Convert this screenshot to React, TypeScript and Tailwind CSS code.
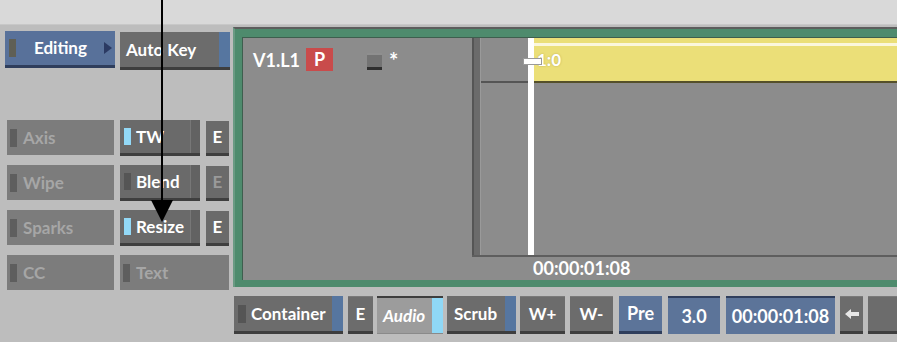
import React from "react";

function GrayBtn({ className = "", children }: { className?: string; children?: React.ReactNode }) {
  return (
    <div
      className={`flex items-center bg-[#6c6c6c] border-b-[3px] border-b-[#3e3e3e] border-t border-t-[#7a7a7a] text-white font-bold text-[17px] ${className}`}
    >
      {children}
    </div>
  );
}

function FlatBtn({ label, className = "" }: { label: string; className?: string }) {
  return (
    <div className={`flex items-center h-[35px] bg-[#7c7c7c] text-[#a6a6a6] font-bold text-[17px] ${className}`}>
      <div className="w-[7px] h-[18px] bg-[#5e5e5e] ml-[3px] mr-[6px]" />
      {label}
    </div>
  );
}

function FxRow({ label, on, eOn }: { label: string; on: boolean; eOn: boolean }) {
  return (
    <div className="flex items-center">
      <div className="flex h-[36px] w-[80px] bg-[#6a6a6a] border-b-[3px] border-b-[#3f3f3f]">
        <div className="flex items-center flex-1 text-white font-bold text-[17px]">
          <div className={`w-[7px] h-[17px] ml-[4px] mr-[5px] ${on ? "bg-[#93d9f7]" : "bg-[#555555]"}`} />
          {label}
        </div>
        <div className="w-[10px] bg-[#626262] border-l border-l-[#777777]" />
      </div>
      <div
        className={`ml-[6px] flex items-center justify-center w-[23px] h-[35px] bg-[#6a6a6a] border-b-[3px] border-b-[#3f3f3f] font-bold text-[17px] ${eOn ? "text-white" : "text-[#9a9a9a]"}`}
      >
        E
      </div>
    </div>
  );
}

export default function App() {
  return (
    <div className="relative w-[897px] h-[342px] overflow-hidden bg-[#bdbdbd] font-['Lato','Open_Sans',sans-serif]">
      <div className="h-[25px] bg-[#d9d9d9] border-b border-b-[#c8c8c8]" />
      <div className="flex">
        {/* left column */}
        <div className="w-[233px] shrink-0 pt-[6px]">
          <div className="flex items-start pl-[5px]">
            <div className="flex items-center w-[110px] h-[37px] bg-[#58719a] border-b-[3px] border-b-[#2f3e5c] text-white font-bold text-[17px]">
              <div className="w-[7px] h-[18px] bg-[#5f5f55] ml-[4px] mr-[18px]" />
              <span>Editing</span>
              <svg className="ml-auto mr-[3px]" width="8" height="12" viewBox="0 0 8 12">
                <path d="M0 0 L8 6 L0 12 Z" fill="#2b3a63" />
              </svg>
            </div>
            <div className="ml-[5px] mt-[1px] flex w-[110px] h-[38px] bg-[#6c6c6c] border-b-[3px] border-b-[#3e3e3e]">
              <div className="flex items-center flex-1 pl-[6px] text-white font-bold text-[17px]">Auto Key</div>
              <div className="w-[11px] bg-[#5676a0]" />
            </div>
          </div>
          <div className="mt-[50px] flex flex-col gap-[9px] pl-[7px]">
            <div className="flex gap-[6px]">
              <FlatBtn label="Axis" className="w-[107px]" />
              <FxRow label="TW" on eOn />
            </div>
            <div className="flex gap-[6px]">
              <FlatBtn label="Wipe" className="w-[107px]" />
              <FxRow label="Blend" on={false} eOn={false} />
            </div>
            <div className="flex gap-[6px]">
              <FlatBtn label="Sparks" className="w-[107px]" />
              <FxRow label="Resize" on eOn />
            </div>
            <div className="flex gap-[6px]">
              <FlatBtn label="CC" className="w-[107px]" />
              <FlatBtn label="Text" className="w-[109px]" />
            </div>
          </div>
        </div>

        {/* right column */}
        <div className="flex-1 flex flex-col">
          <div className="mt-[2px] h-[260px] bg-[#4e8b6d] border-l-[2px] border-l-[#6a9a83] border-t-[2px] border-t-[#5d5d5d] pl-[7px] pt-[8px] pb-[7px]">
            <div className="h-full bg-[#8c8c8c] border-l border-t border-[#3e5e4e] flex">
              {/* track header */}
              <div className="w-[229px] shrink-0 flex items-start pt-[11px] pl-[10px]">
                <span className="text-white font-bold text-[18px] leading-[22px]">V1.L1</span>
                <div className="ml-[6px] -mt-[1px] w-[27px] h-[23px] bg-[#c94b4b] flex items-center justify-center text-white font-bold text-[18px]">
                  P
                </div>
                <div className="ml-[34px] mt-[4px] w-[15px] h-[17px] bg-[#737373] border-t-[2px] border-t-[#8f8f8f] border-b-[3px] border-b-[#2f2f2f]" />
                <span className="ml-[7px] mt-[1px] text-white font-bold text-[22px] leading-[22px]">*</span>
              </div>
              <div className="flex-1 flex flex-col">
                <div className="h-[219px] flex border-b-[2px] border-b-[#5e5e5e]">
                  {/* scroll bar */}
                  <div className="w-[9px] shrink-0 bg-[#6b6b6b] border-l-[2px] border-l-[#555555] border-r border-r-[#9a9a9a]" />
                  {/* timeline */}
                  <div className="relative flex-1 flex items-start">
                    <div className="w-[47px] h-[45px] border-b-[2px] border-b-[#555555]" />
                    <div className="flex-1 h-[45px] bg-[#ebdf78] border-b-[2px] border-b-[#55502a] ml-[6px] pt-[5px]">
                      <div className="h-[3px] bg-[#fbf7dc]" />
                      <div className="pl-[3px] pt-[4px] text-white font-bold text-[17px] leading-[20px] [text-shadow:0_0_2px_#b8aa55]">1:0</div>
                    </div>
                    <div className="absolute left-[47px] top-0 bottom-0 w-[6px] bg-white" />
                    <div className="absolute left-[42px] top-[20px] w-[19px] h-[7px] bg-white border border-[#9a9a9a]" />
                  </div>
                </div>
                <div className="flex-1 pl-[61px] text-white font-bold text-[18px] leading-[22px]">00:00:01:08</div>
              </div>
            </div>
          </div>

          {/* toolbar */}
          <div className="mt-[9px] ml-[1px] flex h-[38px] text-white font-bold text-[17px]">
            <div className="flex w-[109px] bg-[#6c6c6c] border-b-[3px] border-b-[#3e3e3e]">
              <div className="flex items-center flex-1">
                <div className="w-[8px] h-[18px] bg-[#555555] ml-[4px] mr-[5px]" />
                Container
              </div>
              <div className="w-[11px] bg-[#5676a0]" />
            </div>
            <GrayBtn className="ml-[5px] w-[25px] justify-center text-[#9a9a9a]">E</GrayBtn>
            <div className="ml-[4px] flex w-[66px] bg-[#9c9c9c] border-t-[2px] border-t-[#3e3e3e] border-b border-b-[#8a8a8a]">
              <div className="flex items-center flex-1 pl-[6px] italic">Audio</div>
              <div className="w-[11px] bg-[#8fd8f6]" />
            </div>
            <div className="ml-[4px] flex w-[69px] bg-[#6c6c6c] border-b-[3px] border-b-[#3e3e3e]">
              <div className="flex items-center flex-1 pl-[7px]">Scrub</div>
              <div className="w-[11px] bg-[#5676a0]" />
            </div>
            <GrayBtn className="ml-[4px] w-[45px] justify-center">W+</GrayBtn>
            <GrayBtn className="ml-[5px] w-[43px] justify-center">W-</GrayBtn>
            <div className="ml-[6px] w-[43px] flex items-center justify-center bg-[#5c7499] border-b-[3px] border-b-[#2f3e5c] text-[18px]">Pre</div>
            <div className="ml-[6px] w-[52px] flex items-center justify-center bg-[#5c7499] border-t-[2px] border-t-[#2f3e5c] text-[18px]">3.0</div>
            <div className="ml-[6px] w-[109px] flex items-center justify-center bg-[#5c7499] border-t-[2px] border-t-[#2f3e5c] text-[18px]">00:00:01:08</div>
            <GrayBtn className="ml-[5px] w-[23px] justify-center">
              <svg width="14" height="10" viewBox="0 0 14 10">
                <path d="M0 5 L6 0 L6 3 L14 3 L14 7 L6 7 L6 10 Z" fill="#e6e6e6" />
              </svg>
            </GrayBtn>
            <GrayBtn className="ml-[5px] w-[40px]" />
          </div>
        </div>
      </div>

      {/* annotation arrow */}
      <div className="absolute left-[161px] top-0 w-[2px] h-[204px] bg-black" />
      <svg className="absolute left-[151px] top-[200px]" width="22" height="22" viewBox="0 0 22 22">
        <path d="M0 0 L22 0 L11 22 Z" fill="#000" />
      </svg>
    </div>
  );
}
